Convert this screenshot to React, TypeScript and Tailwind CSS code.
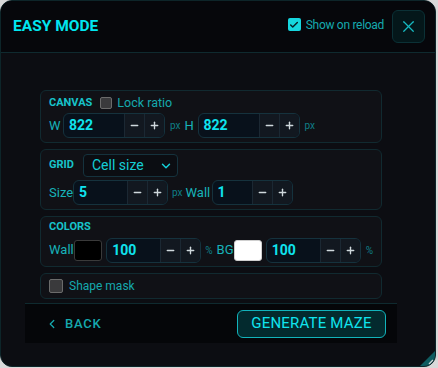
import React, { useState } from 'react';
import { X, Minus, Plus, ChevronDown, ChevronLeft, Check } from 'lucide-react';

function Stepper({ value, width }: { value: string; width: string }) {
  return (
    <div className={`flex h-[25px] ${width} overflow-hidden rounded-[6px] border border-[#15323d] bg-[#08111b]`}>
      <div className="flex flex-1 items-center pl-[5px] text-[14px] font-bold text-[#0fe3ee]">{value}</div>
      <button className="flex w-[20px] items-center justify-center border-l border-[#1b2833] bg-[#121820] text-[#cfd8dc]">
        <Minus size={11} strokeWidth={3} />
      </button>
      <button className="flex w-[20px] items-center justify-center border-l border-[#1b2833] bg-[#121820] text-[#cfd8dc]">
        <Plus size={11} strokeWidth={3} />
      </button>
    </div>
  );
}

function Section({ children, className = '' }: { children: React.ReactNode; className?: string }) {
  return (
    <div className={`rounded-[6px] border border-[#112a30] bg-[#101116] px-[8px] ${className}`}>{children}</div>
  );
}

function App() {
  const [showOnReload, setShowOnReload] = useState(true);

  return (
    <div className="flex h-[368px] w-[438px] bg-[#d9d9d9]" style={{ fontFamily: 'Roboto, "Liberation Sans", sans-serif' }}>
      <div className="relative flex h-[367px] w-[436px] flex-col overflow-hidden rounded-[12px] border border-[#0d2529] bg-[#0c0d12]">
        {/* Header */}
        <div className="flex h-[52px] shrink-0 items-center border-b border-[#0f2a2f] bg-[#06070b] pl-[12px] pr-[10px]">
          <div className="text-[15.5px] font-bold text-[#00e6ef]">EASY MODE</div>
          <label className="ml-auto mb-[4px] flex items-center gap-[5px]" onClick={() => setShowOnReload(!showOnReload)}>
            <span className="flex h-[13px] w-[13px] items-center justify-center rounded-[2px] bg-[#16d6df] text-[#06222a]">
              {showOnReload && <Check size={10} strokeWidth={3.5} />}
            </span>
            <span className="text-[12px] tracking-[-0.3px] text-[#15a9ae]">Show on reload</span>
          </label>
          <button className="ml-[8px] flex h-[33px] w-[33px] items-center justify-center rounded-[6px] border border-[#0b3136] bg-[#04171a] text-[#16b9c0]">
            <X size={19} strokeWidth={1.6} />
          </button>
        </div>

        {/* Body */}
        <div className="flex flex-col gap-[6px] pl-[39px] pt-[37px]">
          <Section className="h-[53px] w-[342px] pt-[3px]">
            <div className="flex items-center">
              <span className="text-[11px] font-bold text-[#17c3ca]">CANVAS</span>
              <span className="ml-[8px] h-[12px] w-[12px] rounded-[2px] border border-[#6b6b6b] bg-[#3a3a3c]" />
              <span className="ml-[5px] text-[12.5px] text-[#15a9ae]">Lock ratio</span>
            </div>
            <div className="flex items-center">
              <span className="w-[14px] text-[13px] text-[#17b3b9]">W</span>
              <Stepper value="822" width="w-[102px]" />
              <span className="ml-[5px] text-[10px] text-[#0f7f86]">px</span>
              <span className="ml-[4px] w-[13px] text-[13px] text-[#17b3b9]">H</span>
              <Stepper value="822" width="w-[102px]" />
              <span className="ml-[5px] text-[10px] text-[#0f7f86]">px</span>
            </div>
          </Section>

          <Section className="h-[61px] w-[342px] pt-[4px]">
            <div className="flex items-center">
              <span className="w-[34px] text-[11px] font-bold text-[#17c3ca]">GRID</span>
              <div className="flex h-[23px] w-[95px] items-center justify-between rounded-[4px] border border-[#15323d] bg-[#0b0d12] pl-[8px] pr-[4px] text-[14px] text-[#14cdd5]">
                <span>Cell size</span>
                <ChevronDown size={14} strokeWidth={2.5} />
              </div>
            </div>
            <div className="mt-[3px] flex items-center">
              <span className="w-[24px] text-[13px] text-[#17b3b9]">Size</span>
              <Stepper value="5" width="w-[95px]" />
              <span className="ml-[4px] text-[10px] text-[#0f7f86]">px</span>
              <span className="ml-[3px] w-[26px] text-[13px] text-[#17b3b9]">Wall</span>
              <Stepper value="1" width="w-[81px]" />
            </div>
          </Section>

          <Section className="h-[51px] w-[342px] pt-[2px]">
            <div className="text-[11px] font-bold text-[#17c3ca]">COLORS</div>
            <div className="mt-[2px] flex items-center">
              <span className="w-[25px] text-[13px] text-[#17b3b9]">Wall</span>
              <span className="h-[21px] w-[29px] rounded-[3px] border border-[#3a3a3a] bg-black" />
              <span className="ml-[4px]">
                <Stepper value="100" width="w-[95px]" />
              </span>
              <span className="ml-[4px] text-[10px] text-[#0f7f86]">%</span>
              <span className="ml-[4px] w-[18px] text-[13px] text-[#17b3b9]">BG</span>
              <span className="h-[21px] w-[28px] rounded-[3px] border border-[#cfcfcf] bg-white" />
              <span className="ml-[4px]">
                <Stepper value="100" width="w-[95px]" />
              </span>
              <span className="ml-[5px] text-[10px] text-[#0f7f86]">%</span>
            </div>
          </Section>

          <Section className="flex h-[26px] w-[342px] items-center gap-[6px]">
            <span className="h-[14px] w-[14px] rounded-[2px] border border-[#6b6b6b] bg-[#3a3a3c]" />
            <span className="text-[12px] text-[#15a9ae]">Shape mask</span>
          </Section>
        </div>

        {/* Footer */}
        <div className="ml-[24px] mt-[4px] flex h-[40px] w-[372px] items-center border-t border-[#0f2a2f] bg-[#050609] pl-[20px] pr-[11px]">
          <button className="flex items-center gap-[6px] text-[13px] font-medium tracking-[0.8px] text-[#15a9ae]">
            <ChevronLeft size={14} strokeWidth={2.2} />
            <span>BACK</span>
          </button>
          <button className="ml-auto flex h-[28px] w-[149px] items-center justify-center rounded-[6px] border border-[#12b3bb] bg-[#032a2e] text-[15px] tracking-[0.2px] text-[#10e4ee]">
            GENERATE MAZE
          </button>
        </div>

        {/* Resize grip */}
        <svg className="absolute bottom-0 right-0" width="16" height="16" viewBox="0 0 16 16">
          <polygon points="16,1 16,16 1,16" fill="#0f5c60" />
          <path d="M10 14 L14 10" stroke="#d0d6d8" strokeWidth="1.4" />
        </svg>
      </div>
    </div>
  );
}

export default App;
